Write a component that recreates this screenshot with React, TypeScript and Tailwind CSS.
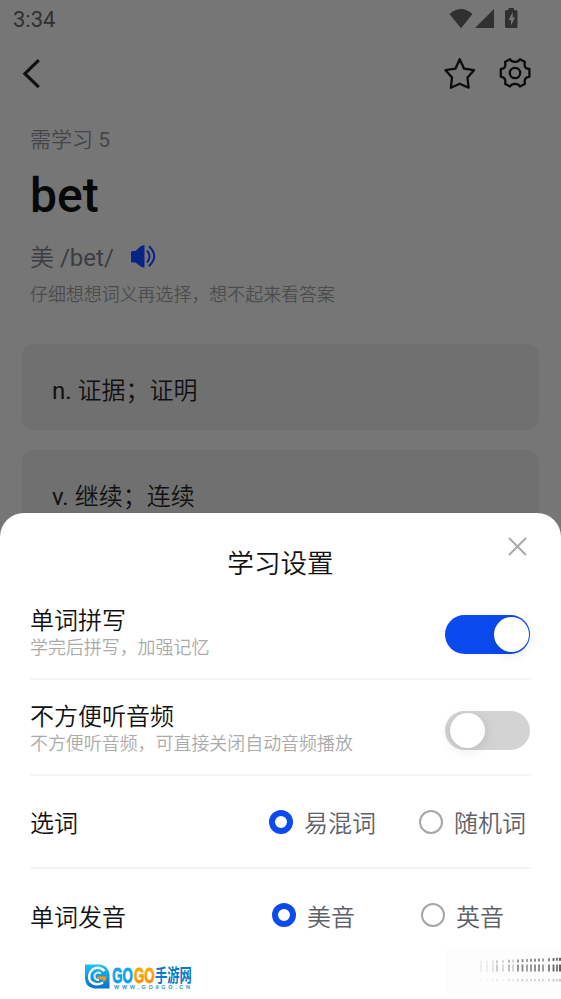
import React from "react";

function StatusIcons() {
  return (
    <svg width="72" height="22" viewBox="449 8 72 22" fill="#303030">
      <path d="M449.500 14Q461 4 472.500 14L461 28.200Z" />
      <path d="M475 28L494 9V28Z" />
      <path
        fillRule="evenodd"
        d="M508.500 8h5.500v2h2q1.500 0 1.500 1.500V26.500q0 1.500 -1.500 1.500h-9.500q-1.500 0 -1.500 -1.500V11.500q0 -1.500 1.500 -1.500h2ZM512.700 12L508.600 20H511V25.500L515.100 17.500H512.700Z"
      />
    </svg>
  );
}

function BackIcon() {
  return (
    <svg width="20" height="32" viewBox="22 58 20 32" fill="none" stroke="#111" strokeWidth="3.200">
      <path d="M38.800 60.200L24.900 73.700L38.800 87.200" />
    </svg>
  );
}

function StarIcon() {
  return (
    <svg width="32" height="32" viewBox="444 57 32 32" fill="none" stroke="#0c0c0c" strokeWidth="2.300" strokeLinejoin="round">
      <path d="M459.700 59.300L464.100 68.700L474 70.200L467.500 77.500L468.600 87.700L459.700 83.700L450.900 87.700L452 77.500L445.600 70.200L455.400 68.700Z" />
    </svg>
  );
}

function GearIcon() {
  return (
    <svg width="32" height="32" viewBox="499 57 32 32" fill="none" stroke="#0c0c0c" strokeWidth="2.300" strokeLinejoin="round">
      <path d="M510 59.300Q511.500 61.900 515 61.900Q518.500 61.900 520 59.300L525 62Q524 65.400 525.500 67.500Q526.800 69 529.400 69V76.800Q526.800 76.800 525.500 78.500Q524 80.500 525 83.800L520 86.500Q518.500 83.900 515 83.900Q511.500 83.900 510 86.500L505 83.800Q506 80.500 504.500 78.500Q503.200 76.800 500.800 76.800V69Q503.200 69 504.500 67.500Q506 65.400 505 62Z" />
      <circle cx="515" cy="73" r="5.200" />
    </svg>
  );
}

function SpeakerIcon() {
  return (
    <svg width="26" height="24" viewBox="130 245 26 24" fill="none" stroke="#082383" strokeWidth="2" strokeLinecap="round">
      <path d="M131 252.500Q131 251 132.500 251H135.500L141 246Q142 245.300 144.500 245.300V267.600Q142 267.600 141 266.800L135.500 262.500H132.500Q131 262.500 131 261Z" fill="#082383" stroke="none" />
      <path d="M147.500 251.200Q151.500 256.500 147.500 261.800M149.500 246.800Q159 256.500 149.500 265.500" />
    </svg>
  );
}

function Toggle({ on = false }: { on?: boolean }) {
  return (
    <div
      className={
        "flex h-[39px] w-[85px] shrink-0 items-center rounded-full " +
        (on ? "justify-end bg-[#0b4aee] pr-px" : "bg-[#d3d3d3] pl-[5px]")
      }
    >
      <div className="size-[35px] rounded-full bg-white shadow-[0_2px_12px_rgba(0,0,0,0.12)]" />
    </div>
  );
}

function Radio({ label, on = false }: { label: string; on?: boolean }) {
  return (
    <div className="flex items-center gap-[11px]">
      <span
        className={
          "size-6 rounded-full " + (on ? "border-[6px] border-[#0b4aee]" : "border-2 border-[#a6a6a6]")
        }
      />
      <span className="pt-[5px] text-2xl leading-[30px] text-[#5e6068]">{label}</span>
    </div>
  );
}

function SwitchRow({ title, hint, on }: { title: string; hint: string; on?: boolean }) {
  return (
    <div className="flex h-24 items-center justify-between border-b-2 border-[#f5f5f5] pr-[1px]">
      <div className="pt-[4px]">
        <p className="text-2xl leading-[29px] text-[#111]">{title}</p>
        <p className="text-[17.950px] leading-6 text-[#aaa]">{hint}</p>
      </div>
      <div className="pt-[6px]">
        <Toggle on={on} />
      </div>
    </div>
  );
}

function Option({ part, meaning }: { part: string; meaning: string }) {
  return (
    <div className="flex h-[86px] items-center rounded-xl bg-[#707070] px-[30px] pt-2">
      <p>
        {part} <span className="font-[350]">{meaning}</span>
      </p>
    </div>
  );
}

function Logo() {
  return (
    <svg width="110" height="31" viewBox="84 962 110 31">
      <defs>
        <linearGradient id="blue" x2="0" y2="1">
          <stop stopColor="#20c2f3" />
          <stop offset="1" stopColor="#0870c8" />
        </linearGradient>
        <linearGradient id="cyan" x2="0" y2="1">
          <stop stopColor="#14b4f0" />
          <stop offset="1" stopColor="#0d8ede" />
        </linearGradient>
        <linearGradient id="orange" x2="0" y2="1">
          <stop stopColor="#ffc400" />
          <stop offset="1" stopColor="#ff7900" />
        </linearGradient>
      </defs>
      <path d="M85 964.500H100Q109.500 966 109.500 976V988.500H94Q85 987 85 978Z" fill="url(#blue)" />
      <path d="M104.500 971Q99 965.500 92.500 969.500Q87 975 90.500 981.500Q96 986.500 103 982.500" fill="none" stroke="#fff" strokeWidth="2.400" />
      <path d="M101 973.500Q97 971 94.500 975Q94 980 99 980" fill="none" stroke="#d4f3ff" strokeWidth="2" />
      <path d="M97 976.500H106.500Q106.500 980.500 103 982V979.500H99Z" fill="#ff9800" />
      <g fontFamily="'Liberation Sans', sans-serif" fontWeight="700">
        <g transform="translate(0 982.500) scale(1 1.700)" fontSize="13.300" strokeWidth=".5">
          <text x="112.200" y="0" fill="url(#cyan)" stroke="#12a3e6">GO</text>
          <text x="134" y="0" fill="url(#orange)" stroke="#ff9d00">GO</text>
        </g>
        <text x="114" y="989" fontSize="5.500" textLength="76" fill="#2299d5">WWW.GO9GO.CN</text>
      </g>
      <text
        transform="translate(155 981.500) scale(1 1.450)"
        fontSize="12.300"
        fontWeight="700"
        fontFamily="'Noto Sans CJK SC', sans-serif"
        fill="#0878c7"
      >
        手游网
      </text>
    </svg>
  );
}

// Faded ticks: x position and opacity of each column
const ticks = [
  [481, 0.08], [487, 0.08], [493, 0.14], [497, 0.26], [503, 0.18], [509, 0.35], [513, 0.22],
  [518, 0.55], [522.500, 0.6], [527, 0.5], [531, 0.55], [535, 0.6], [539, 0.6], [543, 0.5],
  [549, 0.65], [553.500, 0.75], [557, 0.7], [560, 0.85],
];

function FadedTicks() {
  return (
    <svg width="117" height="46" viewBox="444 948 117 46">
      <path d="M446 948H561V994H446Z" fill="#fdfdfd" />
      {ticks.map(([x, o]) => (
        <g key={x} stroke="#333" strokeWidth="1.800" opacity={o}>
          <path d={`M${x} ${959.500 - (x - 515) * 0.04}v3`} />
          <path d={`M${x} 964.500v7`} />
          <path d={`M${x} 979v2.500`} opacity=".35" />
        </g>
      ))}
    </svg>
  );
}

export default function App() {
  return (
    <div className="relative h-[999px] w-[561px] overflow-hidden bg-[#767676] font-['Roboto','Noto_Sans_CJK_SC',sans-serif]">
      <div className="flex h-[38px] items-center justify-between pr-10 pl-[13px] text-[22px] text-[#303030]">
        <span className="pt-[2px] leading-[38px]">3:34</span>
        <StatusIcons />
      </div>
      <header className="flex h-[70px] items-center justify-between pr-[30px] pl-[22px]">
        <div className="pt-px">
          <BackIcon />
        </div>
        <div className="flex gap-[23px]">
          <StarIcon />
          <GearIcon />
        </div>
      </header>
      <section className="h-[236px] px-[30px] pt-4">
        <p className="text-[21px] leading-8 text-[#43454a]">
          <span className="font-[350]">需学习</span> 5
        </p>
        <h1 className="mt-[10px] text-[48px] leading-[60px] font-medium text-[#080808]">bet</h1>
        <div className="mt-3 flex h-10 items-center gap-4">
          <span className="text-2xl leading-10 text-[#3b3d43]">
            <span className="font-[350]">美</span> /bet/
          </span>
          <div className="pb-[2px]">
            <SpeakerIcon />
          </div>
        </div>
        <p className="mt-[5px] text-[17.950px] leading-6 font-[350] text-[#4c4c4c]">仔细想想词义再选择，想不起来看答案</p>
      </section>
      <div className="flex flex-col gap-5 px-[22px] text-2xl text-[#101010]">
        <Option part="n." meaning="证据；证明" />
        <Option part="v." meaning="继续；连续" />
      </div>

      <div className="absolute inset-x-0 bottom-0 h-[486px] rounded-t-[24px] bg-white px-[30px] font-[350]">
        <div className="flex h-[71px] items-center justify-center pt-[30px]">
          <h2 className="text-[26.600px] leading-10 text-[#111]">学习设置</h2>
          <svg className="absolute top-6 right-[34px]" width="19" height="19" fill="none" stroke="#aaa" strokeWidth="2">
            <path d="M1 1L18 18M18 1L1 18" />
          </svg>
        </div>
        <SwitchRow title="单词拼写" hint="学完后拼写，加强记忆" on />
        <SwitchRow title="不方便听音频" hint="不方便听音频，可直接关闭自动音频播放" />
        <div className="flex h-[93px] items-center justify-between border-b-2 border-[#f5f5f5] pr-[5px]">
          <span className="pt-[5px] text-2xl text-[#111]">选词</span>
          <div className="flex gap-[43px]">
            <Radio label="易混词" on />
            <Radio label="随机词" />
          </div>
        </div>
        <div className="flex h-[93px] items-center justify-between pr-[27px] pb-px">
          <span className="pt-[5px] text-2xl text-[#111]">单词发音</span>
          <div className="flex gap-[66px]">
            <Radio label="美音" on />
            <Radio label="英音" />
          </div>
        </div>
        <div className="-mr-[30px] flex items-start justify-between pl-[54px]">
          <Logo />
          <div className="-mt-[14px]">
            <FadedTicks />
          </div>
        </div>
      </div>
    </div>
  );
}
